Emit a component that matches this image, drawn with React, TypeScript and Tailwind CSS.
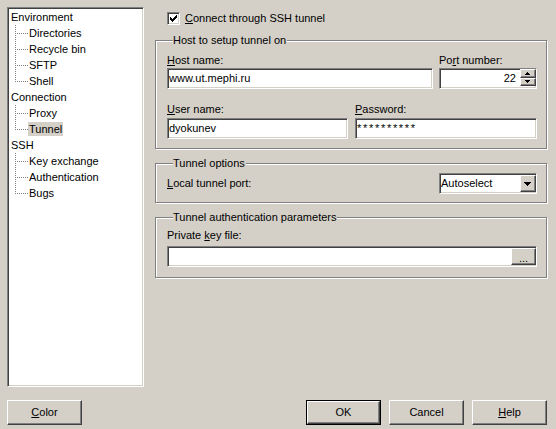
import React from 'react';

const sunken =
  'border border-t-[#808080] border-l-[#808080] border-b-white border-r-white shadow-[inset_1px_1px_0_#404040,inset_-1px_-1px_0_#d4d0c8] bg-white';
const raised =
  'border border-t-white border-l-white border-b-[#404040] border-r-[#404040] shadow-[inset_-1px_-1px_0_#808080] bg-[#d4d0c8]';
const group = 'border border-[#808080] shadow-[inset_1px_1px_0_#fff,1px_1px_0_#fff]';

const TreeParent: React.FC<{ label: string }> = ({ label }) => (
  <div className="flex h-[16px] items-center pl-[3px] leading-[14px]">{label}</div>
);

const TreeChild: React.FC<{ label: string; last?: boolean; selected?: boolean }> = ({ label, last, selected }) => (
  <div className="flex h-[16px] items-center">
    <svg width="20" height="16" className="shrink-0" shapeRendering="crispEdges">
      <line x1="7.5" y1="0" x2="7.5" y2={last ? 9 : 16} stroke="#808080" strokeDasharray="1 1" />
      <line x1="9" y1="8.5" x2="20" y2="8.5" stroke="#808080" strokeDasharray="1 1" />
    </svg>
    <span className={`px-px leading-[14px] ${selected ? 'bg-[#d4d0c8]' : ''}`}>{label}</span>
  </div>
);

const Checkbox: React.FC = () => {
  const starts = [2, 3, 4, 3, 2, 1, 0];
  return (
    <div className={`${sunken} h-[13px] w-[13px] shrink-0`}>
      <svg width="11" height="11" shapeRendering="crispEdges">
        {starts.map((s, c) => (
          <rect key={c} x={2 + c} y={2 + s} width="1" height="3" fill="#000" />
        ))}
      </svg>
    </div>
  );
};

const GroupTitle: React.FC<{ children: React.ReactNode }> = ({ children }) => (
  <div className="-mt-[7px] ml-[6px] w-fit bg-[#d4d0c8] pr-px leading-[13px]">{children}</div>
);

const Field: React.FC<{ value: string; className?: string }> = ({ value, className }) => (
  <div className={`${sunken} flex h-[21px] items-center pl-[1px] ${className ?? ''}`}>{value}</div>
);

const Button: React.FC<{ children: React.ReactNode; isDefault?: boolean; className?: string }> = ({
  children,
  isDefault,
  className,
}) =>
  isDefault ? (
    <div className={`h-[25px] w-[75px] border border-black ${className ?? ''}`}>
      <div className={`${raised} flex h-full w-full items-center justify-center`}>{children}</div>
    </div>
  ) : (
    <div className={`${raised} flex h-[25px] w-[75px] items-center justify-center ${className ?? ''}`}>{children}</div>
  );

const App: React.FC = () => {
  return (
    <div className="flex h-[429px] w-[556px] flex-col overflow-hidden bg-[#d4d0c8] font-['Liberation_Sans',Arial,sans-serif] text-[11px] text-black">
      <div className="flex items-start">
        {/* tree */}
        <div className={`${sunken} ml-[7px] mt-[7px] h-[380px] w-[137px] shrink-0 pt-[1px]`}>
          <TreeParent label="Environment" />
          <TreeChild label="Directories" />
          <TreeChild label="Recycle bin" />
          <TreeChild label="SFTP" />
          <TreeChild label="Shell" last />
          <TreeParent label="Connection" />
          <TreeChild label="Proxy" />
          <TreeChild label="Tunnel" last selected />
          <TreeParent label="SSH" />
          <TreeChild label="Key exchange" />
          <TreeChild label="Authentication" />
          <TreeChild label="Bugs" last />
        </div>

        {/* right panel */}
        <div className="ml-[11px] w-[392px]">
          <div className="ml-[12px] mt-[12px] flex h-[13px] items-center gap-[5px]">
            <Checkbox />
            <span className="leading-[13px]">
              <u>C</u>onnect through SSH tunnel
            </span>
          </div>

          <div className={`${group} mt-[15px] h-[109px] pl-[11px] pr-[9px]`}>
            <GroupTitle>Host to setup tunnel on</GroupTitle>
            <div className="grid grid-cols-[266px_98px] gap-x-[6px]">
              <div>
                <div className="mt-[7px] leading-[13px]">
                  <u>H</u>ost name:
                </div>
                <Field value="www.ut.mephi.ru" className="mt-[1px]" />
              </div>
              <div>
                <div className="mt-[7px] leading-[13px]">
                  Po<u>r</u>t number:
                </div>
                <div className={`${sunken} mt-[1px] flex h-[21px] items-center`}>
                  <span className="flex-1 pr-[4px] text-right">22</span>
                  <div className="flex h-full w-[16px] flex-col">
                    <div className={`${raised} h-[9px]`}>
                      <svg width="14" height="7" shapeRendering="crispEdges">
                        <rect x="6" y="2" width="1" height="1" />
                        <rect x="5" y="3" width="3" height="1" />
                        <rect x="4" y="4" width="5" height="1" />
                      </svg>
                    </div>
                    <div className={`${raised} h-[8px]`}>
                      <svg width="14" height="6" shapeRendering="crispEdges">
                        <rect x="4" y="1" width="5" height="1" />
                        <rect x="5" y="2" width="3" height="1" />
                        <rect x="6" y="3" width="1" height="1" />
                      </svg>
                    </div>
                  </div>
                </div>
              </div>
            </div>
            <div className="grid grid-cols-[181px_182px] gap-x-[7px]">
              <div>
                <div className="mt-[14px] leading-[13px]">
                  <u>U</u>ser name:
                </div>
                <Field value="dyokunev" className="mt-[2px]" />
              </div>
              <div>
                <div className="mt-[14px] leading-[13px]">
                  <u>P</u>assword:
                </div>
                <div className={`${sunken} mt-[2px] flex h-[21px] items-center pl-[1px] tracking-[1.7px]`}>
                  **********
                </div>
              </div>
            </div>
          </div>

          <div className={`${group} mt-[14px] h-[40px] pl-[11px] pr-[9px]`}>
            <GroupTitle>Tunnel options</GroupTitle>
            <div className="mt-[3px] flex h-[21px] items-center justify-between">
              <span>
                <u>L</u>ocal tunnel port:
              </span>
              <div className={`${sunken} flex h-[21px] w-[98px] items-center`}>
                <span className="flex-1 pl-[1px]">Autoselect</span>
                <div className={`${raised} flex h-[17px] w-[16px] items-center justify-center`}>
                  <svg width="14" height="15" shapeRendering="crispEdges">
                    <rect x="3" y="6" width="7" height="1" />
                    <rect x="4" y="7" width="5" height="1" />
                    <rect x="5" y="8" width="3" height="1" />
                    <rect x="6" y="9" width="1" height="1" />
                  </svg>
                </div>
              </div>
            </div>
          </div>

          <div className={`${group} mt-[14px] h-[61px] pl-[11px] pr-[9px]`}>
            <GroupTitle>Tunnel authentication parameters</GroupTitle>
            <div className="mt-[5px] leading-[13px]">
              Private <u>k</u>ey file:
            </div>
            <div className={`${sunken} mt-[4px] flex h-[21px] items-center`}>
              <span className="flex-1" />
              <div className={`${raised} flex h-[17px] w-[25px] items-end justify-center pb-[1px] leading-[10px]`}>
                ...
              </div>
            </div>
          </div>
        </div>
      </div>

      <div className="mt-[13px] flex items-center justify-between pl-[7px] pr-[9px]">
        <Button>
          <u>C</u>olor
        </Button>
        <div className="flex gap-[8px]">
          <Button isDefault>OK</Button>
          <Button>Cancel</Button>
          <Button>
            <u>H</u>elp
          </Button>
        </div>
      </div>
    </div>
  );
};

export default App;
